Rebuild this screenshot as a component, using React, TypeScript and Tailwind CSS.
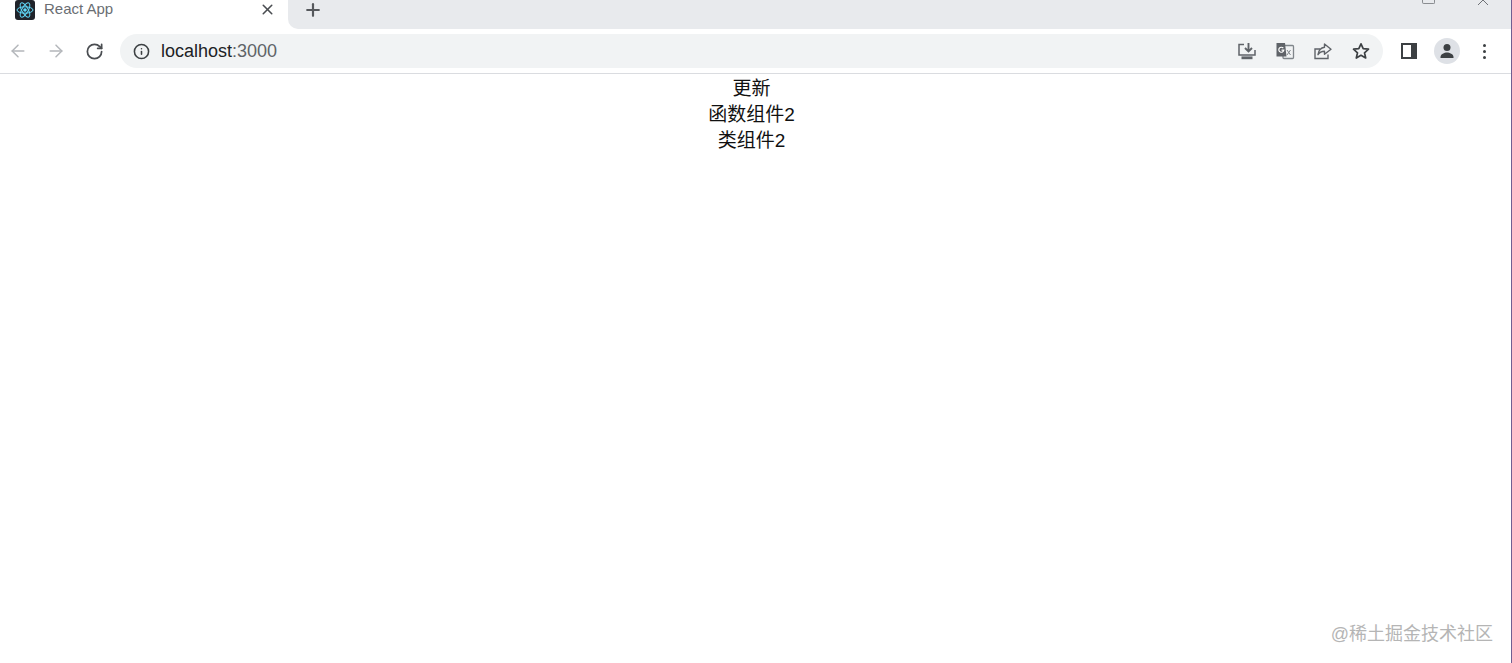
import { ArrowLeft, ArrowRight, Info, Plus, RotateCw, X } from "lucide-react"

const cjk = "font-['Liberation_Sans','Noto_Sans_CJK_SC',sans-serif]"

function ReactIcon() {
  return (
    <svg width="20" height="20" viewBox="0 0 20 20" className="shrink-0 rounded-[3px] bg-[#20232a]">
      <circle cx="10" cy="10" r="1.8" fill="#61dafb" />
      <g fill="none" stroke="#61dafb" strokeWidth="1">
        <ellipse cx="10" cy="10" rx="8" ry="3.2" />
        <ellipse cx="10" cy="10" rx="8" ry="3.2" transform="rotate(60 10 10)" />
        <ellipse cx="10" cy="10" rx="8" ry="3.2" transform="rotate(120 10 10)" />
      </g>
    </svg>
  )
}

function InstallIcon() {
  return (
    <svg width="20" height="20" viewBox="0 0 20 20" fill="none" stroke="#5f6368" strokeWidth="1.5">
      <path d="M7 3.500H2v10.500H18V9" />
      <path d="M11.500 2v8M8 7l3.500 3.500L15 7" strokeWidth="1.900" />
      <path d="M4.500 16.800h11" strokeWidth="2.800" />
    </svg>
  )
}

function TranslateIcon() {
  return (
    <svg width="20" height="20" viewBox="0 0 20 20" fill="none">
      <rect x="8" y="4.500" width="10.500" height="13" rx="1" stroke="#80868b" strokeWidth="1.300" />
      <path d="M12 9l3.500 5M15.500 9L12 14" stroke="#80868b" strokeWidth="1" />
      <path d="M1.500 2h8.500l1.500 13.500H1.500z" fill="#5f6368" />
      <path d="M8.300 7.200a2.500 2.500 0 1 0 .5 2h-2.300" stroke="#fff" strokeWidth="1.200" />
    </svg>
  )
}

function ShareIcon() {
  return (
    <svg width="20" height="20" viewBox="0 0 20 20" fill="none" stroke="#5f6368" strokeWidth="1.400">
      <path d="M7 8H2v9.500h13v-4" />
      <path d="M11.500 3l6.500 5.200-6.500 5v-3c-3 0-5 1-6.500 3.500.5-4 3-7 6.500-7.500z" strokeLinejoin="round" />
    </svg>
  )
}

function StarIcon() {
  return (
    <svg width="20" height="20" viewBox="0 0 20 20" fill="none" stroke="#3c4043" strokeWidth="1.700">
      <path d="M10 2.800l2.200 4.900 5.300.5-4 3.600 1.200 5.200L10 14.300 5.300 17l1.200-5.200-4-3.600 5.300-.5z" strokeLinejoin="round" />
    </svg>
  )
}

function SidePanelIcon() {
  return (
    <svg width="18" height="18" viewBox="0 0 18 18">
      <path fillRule="evenodd" d="M1 1h16v16H1zM3 3v12h8V3z" fill="#3c4043" />
    </svg>
  )
}

function ProfileIcon() {
  return (
    <div className="flex h-[26px] w-[26px] items-center justify-center rounded-full bg-[#dee1e6]">
      <svg width="18" height="18" viewBox="0 0 18 18" fill="#3c4043">
        <circle cx="9" cy="5.500" r="3.500" />
        <path d="M2.500 15c0-3 4-4.500 6.500-4.500s6.500 1.500 6.500 4.500v1h-13z" />
      </svg>
    </div>
  )
}

export default function App() {
  return (
    <div className={`flex h-[663px] flex-col overflow-hidden border-r border-[#6f5f92] bg-white ${cjk}`}>
      <div className="flex h-[29px] bg-white">
        <div className="flex w-[288px] items-center pb-[10px] pl-[15px] pr-[12px]">
          <ReactIcon />
          <span className="ml-[9px] flex-1 text-[15px] text-[#6a6e73]">React App</span>
          <X className="h-[17px] w-[17px] text-[#4a4d51]" strokeWidth={2.2} />
        </div>
        <div className="flex flex-1 rounded-bl-[10px] bg-[#e8eaed]">
          <div className="ml-[15px] flex items-center pb-[10px]">
            <Plus className="h-5 w-5 text-[#55585c]" strokeWidth={2.6} />
          </div>
          <div className="ml-auto flex items-start pr-[21px]">
            <div className="h-[4px] w-[13px] rounded-b-[2px] border-x border-b border-[#8a8d91]" />
            <svg width="14" height="5" viewBox="0 0 14 5" className="ml-[41px]" fill="none" stroke="#6f7276" strokeWidth="1">
              <path d="M2 5l5-5 5 5" />
            </svg>
          </div>
        </div>
      </div>

      <div className="flex h-[45px] items-center border-b border-[#dadce0] pl-[8px] pr-[25px]">
        <ArrowLeft className="h-5 w-5 text-[#b4b7bb]" strokeWidth={1.8} />
        <ArrowRight className="ml-[18px] h-5 w-5 text-[#b4b7bb]" strokeWidth={1.8} />
        <RotateCw className="ml-[19px] h-[19px] w-[19px] text-[#4a4d51]" strokeWidth={2.2} />
        <div className="ml-[16px] flex h-[34px] flex-1 items-center rounded-full bg-[#f1f3f4] pl-[13px] pr-[12px]">
          <Info className="h-[17px] w-[17px] text-[#3c4043]" strokeWidth={2.2} />
          <span className="ml-[11px] flex-1 text-[18px] text-[#202124]">
            localhost<span className="text-[#5f6368]">:3000</span>
          </span>
          <div className="flex items-center gap-[18px]">
            <InstallIcon />
            <TranslateIcon />
            <ShareIcon />
            <StarIcon />
          </div>
        </div>
        <div className="ml-[17px] flex items-center">
          <SidePanelIcon />
          <div className="ml-[16px]">
            <ProfileIcon />
          </div>
          <div className="ml-[23px] flex flex-col gap-[3px]">
            <span className="h-[3px] w-[3px] rounded-full bg-[#3c4043]" />
            <span className="h-[3px] w-[3px] rounded-full bg-[#3c4043]" />
            <span className="h-[3px] w-[3px] rounded-full bg-[#3c4043]" />
          </div>
        </div>
      </div>

      <div className="flex flex-1 flex-col pt-[2px] text-center text-[19px] leading-[26px] text-[#111111]">
        <div className="pr-[8px]">更新</div>
        <div className="pr-[8px]">函数组件2</div>
        <div className="pr-[8px]">类组件2</div>
        <div className="mt-auto pb-[17px] pr-[18px] text-right text-[18px] leading-[24px] text-[#b5b5b5]">
          @稀土掘金技术社区
        </div>
      </div>
    </div>
  )
}
